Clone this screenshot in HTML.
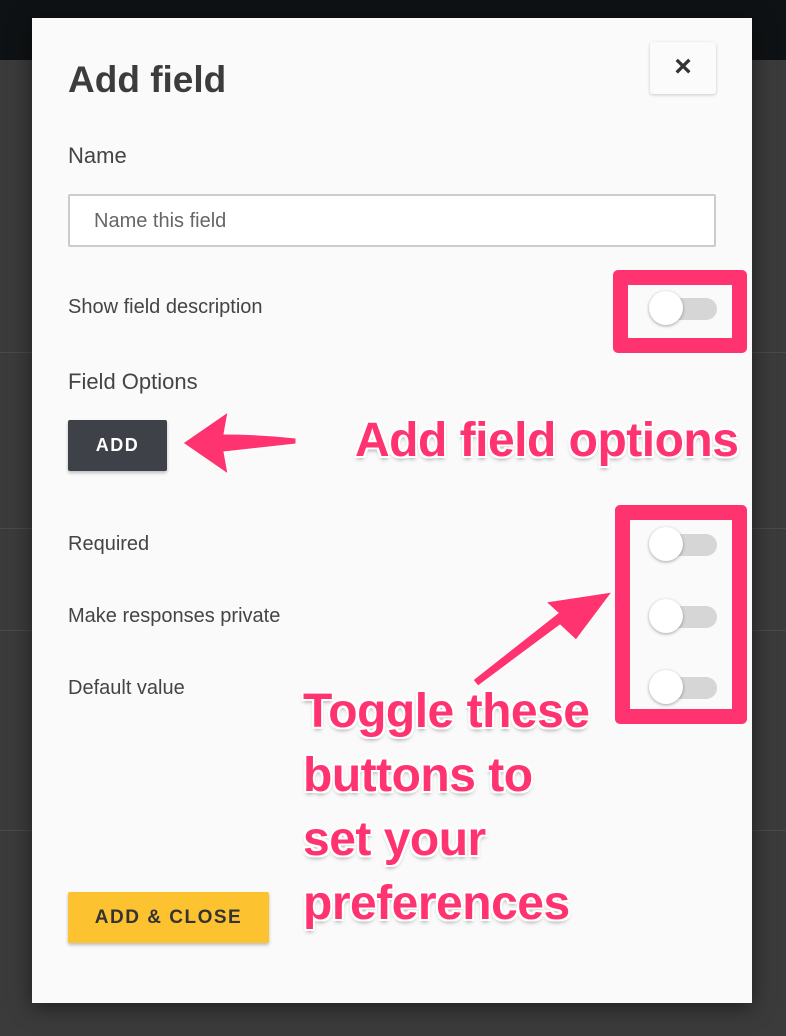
<!DOCTYPE html>
<html><head><meta charset="utf-8"><style>
*{margin:0;padding:0;box-sizing:border-box}
body{width:786px;height:1036px;position:relative;overflow:hidden;background:#3b3b3b;font-family:"Liberation Sans",sans-serif}
.top{position:absolute;left:0;top:0;width:786px;height:60px;background:#0f1214}
.line{position:absolute;left:0;width:786px;height:1px;background:#4a4a4a}
.modal{position:absolute;left:32px;top:18px;width:720px;height:985px;background:#fafafa;box-shadow:0 4px 20px rgba(0,0,0,.5)}
.t{position:absolute;color:#444;font-size:20px}
.close{position:absolute;left:650px;top:42px;width:66px;height:52px;background:#fbfbfb;box-shadow:0 1px 3px rgba(0,0,0,.2);border-radius:3px;text-align:center;line-height:50px;font-size:30px;font-weight:bold;color:#333}
.input{position:absolute;left:68px;top:194px;width:648px;height:53px;border:2px solid #ccc;background:#fff;border-radius:2px}
.tg{position:absolute;width:68px;height:36px}
.tg .tr{position:absolute;left:12px;top:7px;width:56px;height:22px;border-radius:11px;background:#d6d6d6}
.tg .kn{position:absolute;left:0;top:0;width:34px;height:34px;border-radius:50%;background:#fff;box-shadow:0 1px 3px rgba(0,0,0,.35)}
.btn{position:absolute;font-weight:bold;letter-spacing:1.5px;text-align:center;border-radius:2px;box-shadow:0 2px 3px rgba(0,0,0,.25)}
.box{position:absolute;border:15px solid #ff3370;border-radius:5px}
.ann{position:absolute;color:#ff3370;font-weight:bold;font-size:48px;line-height:64px;letter-spacing:-0.5px;text-shadow:-2px -2px 0 #fff,2px -2px 0 #fff,-2px 2px 0 #fff,2px 2px 0 #fff,0 3px 4px rgba(0,0,0,.35)}
</style></head><body>
<div class="top"></div>
<div class="line" style="top:352px"></div>
<div class="line" style="top:528px"></div>
<div class="line" style="top:630px"></div>
<div class="line" style="top:830px"></div>
<div class="modal"></div>
<div class="t" style="left:68px;top:59px;font-size:37px;font-weight:bold;color:#3c3c3c">Add field</div>
<div class="close">×</div>
<div class="t" style="left:68px;top:143px;font-size:22px">Name</div>
<div class="input"></div>
<div class="t" style="left:94px;top:210px;color:#666">Name this field</div>
<div class="t" style="left:68px;top:296px">Show field description</div>
<div class="t" style="left:68px;top:369px;font-size:22px">Field Options</div>
<div class="btn" style="left:68px;top:420px;width:99px;height:51px;line-height:51px;background:#3f4149;color:#fff;font-size:18px">ADD</div>
<div class="t" style="left:68px;top:533px">Required</div>
<div class="t" style="left:68px;top:605px">Make responses private</div>
<div class="t" style="left:68px;top:677px">Default value</div>
<div class="btn" style="left:68px;top:892px;width:201px;height:51px;line-height:52px;background:#fdc22f;color:#333;font-size:19px">ADD &amp; CLOSE</div>
<div class="tg" style="left:649px;top:291px"><div class="tr"></div><div class="kn"></div></div>
<div class="tg" style="left:649px;top:527px"><div class="tr"></div><div class="kn"></div></div>
<div class="tg" style="left:649px;top:599px"><div class="tr"></div><div class="kn"></div></div>
<div class="tg" style="left:649px;top:670px"><div class="tr"></div><div class="kn"></div></div>
<div class="box" style="left:613px;top:270px;width:134px;height:83px"></div>
<div class="box" style="left:615px;top:505px;width:132px;height:219px"></div>
<svg style="position:absolute;left:0;top:0" width="786" height="1036">
<path d="M183 443 L228 412 L224 434 Q260 434 296 438 L296 444 Q260 448 224 452 L228 474 Z" fill="#ff3370" stroke="#fff" stroke-width="1"/>
<path d="M473 680 L478 686 L560 625 L576 640 L612 592 L546 602 L558 613 Z" fill="#ff3370" stroke="#fff" stroke-width="1"/>
</svg>
<div class="ann" style="left:355px;top:409px">Add field options</div>
<div class="ann" style="left:303px;top:680px">Toggle these<br>buttons to<br>set your<br>preferences</div>
</body></html>
